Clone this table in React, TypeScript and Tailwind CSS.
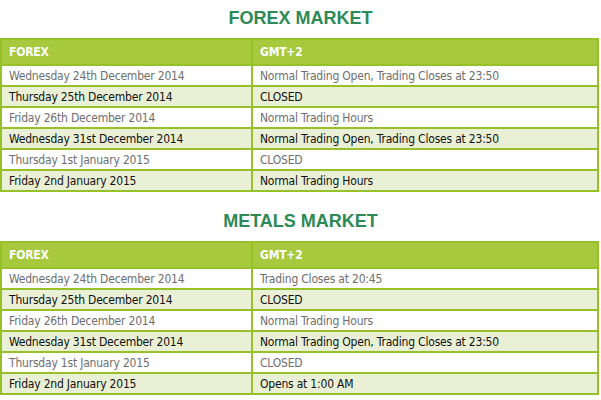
import React from 'react';

type Row = { date: string; info: string };

const forexRows: Row[] = [
  { date: 'Wednesday 24th December 2014', info: 'Normal Trading Open, Trading Closes at 23:50' },
  { date: 'Thursday 25th December 2014', info: 'CLOSED' },
  { date: 'Friday 26th December 2014', info: 'Normal Trading Hours' },
  { date: 'Wednesday 31st December 2014', info: 'Normal Trading Open, Trading Closes at 23:50' },
  { date: 'Thursday 1st January 2015', info: 'CLOSED' },
  { date: 'Friday 2nd January 2015', info: 'Normal Trading Hours' },
];

const metalsRows: Row[] = [
  { date: 'Wednesday 24th December 2014', info: 'Trading Closes at 20:45' },
  { date: 'Thursday 25th December 2014', info: 'CLOSED' },
  { date: 'Friday 26th December 2014', info: 'Normal Trading Hours' },
  { date: 'Wednesday 31st December 2014', info: 'Normal Trading Open, Trading Closes at 23:50' },
  { date: 'Thursday 1st January 2015', info: 'CLOSED' },
  { date: 'Friday 2nd January 2015', info: 'Opens at 1:00 AM' },
];

const MarketTable: React.FC<{ title: string; rows: Row[] }> = ({ title, rows }) => {
  return (
    <section>
      <h2 className="h-[38px] text-center text-[18px] leading-[36px] font-bold text-[#2d8a57] font-['Liberation_Sans',Arial,sans-serif]">
        {title}
      </h2>
      <div className="w-[599px] border-2 border-[#97c128] text-[12px] tracking-[-0.2px] font-['DejaVu_Sans_Condensed','DejaVu_Sans',sans-serif]">
        <div className="grid grid-cols-[251px_1fr] h-[24px] bg-[#a6c93e] font-bold text-white">
          <div className="border-r-2 border-[#97c128] pl-[7px] pt-px leading-[23px]">FOREX</div>
          <div className="pl-[7px] pt-px leading-[23px]">GMT+2</div>
        </div>
        {rows.map((row, i) => {
          const shaded = i % 2 === 1;
          return (
            <div
              key={i}
              className={`grid grid-cols-[251px_1fr] h-[21px] border-t-2 border-[#97c128] ${
                shaded ? 'bg-[#e9f0d6] text-[#111]' : 'bg-white text-[#6e6e6e]'
              }`}
            >
              <div className="border-r-2 border-[#97c128] pl-[7px] pt-px leading-[18px]">{row.date}</div>
              <div className="pl-[7px] pt-px leading-[18px]">{row.info}</div>
            </div>
          );
        })}
      </div>
    </section>
  );
};

export default function App() {
  return (
    <div className="w-[601px] h-[400px] bg-white overflow-hidden">
      <MarketTable title="FOREX MARKET" rows={forexRows} />
      <div className="h-[11px]" />
      <MarketTable title="METALS MARKET" rows={metalsRows} />
    </div>
  );
}
